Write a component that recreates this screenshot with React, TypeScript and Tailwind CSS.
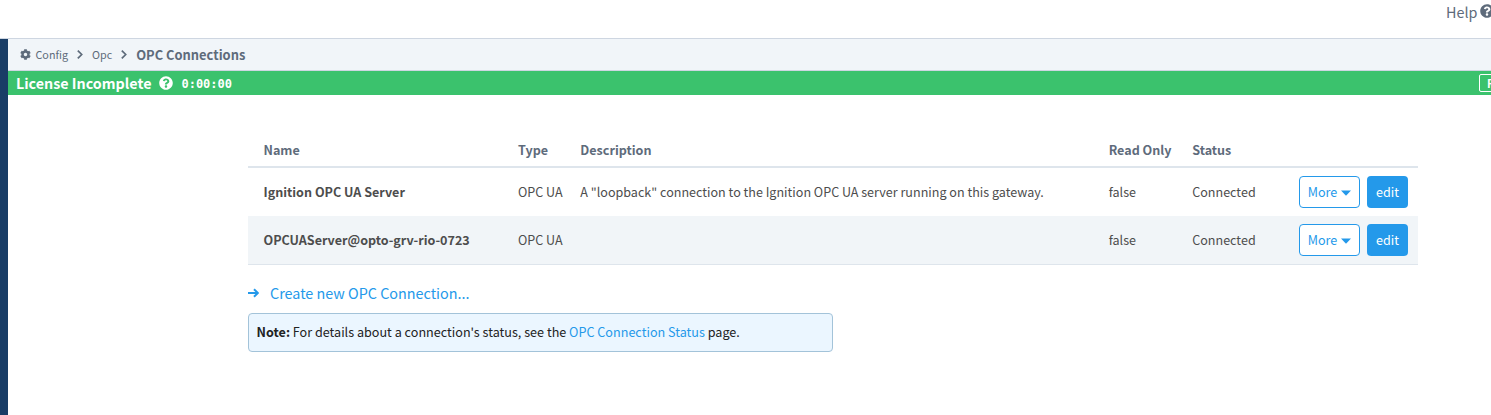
import React from "react";
import { FaCog, FaQuestionCircle } from "react-icons/fa";

const GRID =
  "grid grid-cols-[254.5px_62.3px_528.4px_83.5px_106.8px_1fr] items-center pl-[15.5px]";

function Chevron() {
  return (
    <svg width="6" height="9" viewBox="0 0 6 9" fill="none" stroke="#5e6b7b" strokeWidth="1.7">
      <path d="M0.8 0.6 4.7 4.5 0.8 8.4" />
    </svg>
  );
}

function Row({
  name,
  description,
  className,
}: {
  name: string;
  description: string;
  className: string;
}) {
  return (
    <div className={`${GRID} h-12 text-[#4d4d4d] ${className}`}>
      <span className="font-bold">{name}</span>
      <span>OPC UA</span>
      <span>{description}</span>
      <span>false</span>
      <span>Connected</span>
      <div className="flex gap-[7px]">
        <button className="flex h-8 w-[61px] items-center justify-center gap-1 rounded-[4px] border border-[#2499ea] bg-white text-[#2499ea]">
          More
          <svg className="mt-[1px]" width="10" height="6" viewBox="0 0 10 6" fill="#2499ea">
            <path d="M0 0.5h10L5 5.7z" />
          </svg>
        </button>
        <button className="h-8 w-[41px] rounded-[4px] bg-[#2499ea] text-white">edit</button>
      </div>
    </div>
  );
}

export default function App() {
  return (
    <div className="flex h-[415px] w-[1491px] flex-col overflow-hidden bg-white font-['Noto_Sans_CJK_SC','Noto_Sans',sans-serif] text-[12.57px] leading-[20px] whitespace-nowrap">
      <header className="flex h-[39px] shrink-0 border-b border-[#ced6e1] pl-[1446px]">
        <div className="flex h-[22px] items-center gap-[3px] text-[14.36px] text-[#5e6b7b]">
          <span className="pt-[2px]">Help</span>
          <FaQuestionCircle className="size-[14px] shrink-0" />
        </div>
      </header>
      <div className="flex flex-1">
        <aside className="w-2 shrink-0 bg-[#193d66]" />
        <main className="w-[1483px] overflow-hidden">
          <nav className="flex h-8 items-center border-b border-[#ced6e1] bg-[#f1f5f9] pl-[11.5px] text-[10.77px] text-[#5e6b7b]">
            <FaCog className="mr-[5px] size-[11px]" />
            <span className="mr-[9px]">Config</span>
            <Chevron />
            <span className="mr-[9px] ml-[9px]">Opc</span>
            <Chevron />
            <span className="ml-[9px] text-[12.9px] font-bold">OPC Connections</span>
          </nav>
          <div className="flex h-6 items-center bg-[#3bc26d] pl-2 text-white">
            <span className="text-[14.3px] font-bold">License Incomplete</span>
            <FaQuestionCircle className="ml-2 size-[14px]" />
            <span className="mt-[1px] ml-[8px] font-['DejaVu_Sans_Mono',monospace] text-[12px] font-bold">
              0:00:00
            </span>
            <span className="mr-[-50px] ml-auto flex h-[18px] w-[62px] shrink-0 items-center rounded-[2px] border border-white pl-[7px] text-[11px] font-bold">
              Reset
            </span>
          </div>
          <section className="mt-[39px] ml-60 w-[1170px]">
            <div className={`${GRID} h-[34px] border-b-2 border-[#dee5ec] pb-[1px] font-bold text-[#5e6b7b]`}>
              <span>Name</span>
              <span>Type</span>
              <span>Description</span>
              <span>Read Only</span>
              <span>Status</span>
            </div>
            <Row
              name="Ignition OPC UA Server"
              description={'A "loopback" connection to the Ignition OPC UA server running on this gateway.'}
              className="bg-white"
            />
            <Row
              name="OPCUAServer@opto-grv-rio-0723"
              description=""
              className="bg-[#f1f5f8]"
            />
            <div className="h-px bg-[#dee5ec]" />
            <a className="mt-[17px] flex h-[22px] items-center text-[14.36px] text-[#2499ea]">
              <svg className="mr-[11px]" width="11" height="10" viewBox="0 0 11 10" fill="none" stroke="#2499ea" strokeWidth="2">
                <path d="M0 5h10M6 1.2 9.8 5 6 8.8" />
              </svg>
              Create new OPC Connection...
            </a>
            <div className="mt-[9px] flex h-[39px] w-[585px] items-center rounded-[4px] border border-[#a3c3d9] bg-[#ebf6ff] pb-[2px] pl-[7.5px] text-[12.61px] text-[#222]">
              <span>
                <b>Note:</b> For details about a connection's status, see the{" "}
                <a className="text-[#2499ea]">OPC Connection Status</a> page.
              </span>
            </div>
          </section>
        </main>
      </div>
    </div>
  );
}
